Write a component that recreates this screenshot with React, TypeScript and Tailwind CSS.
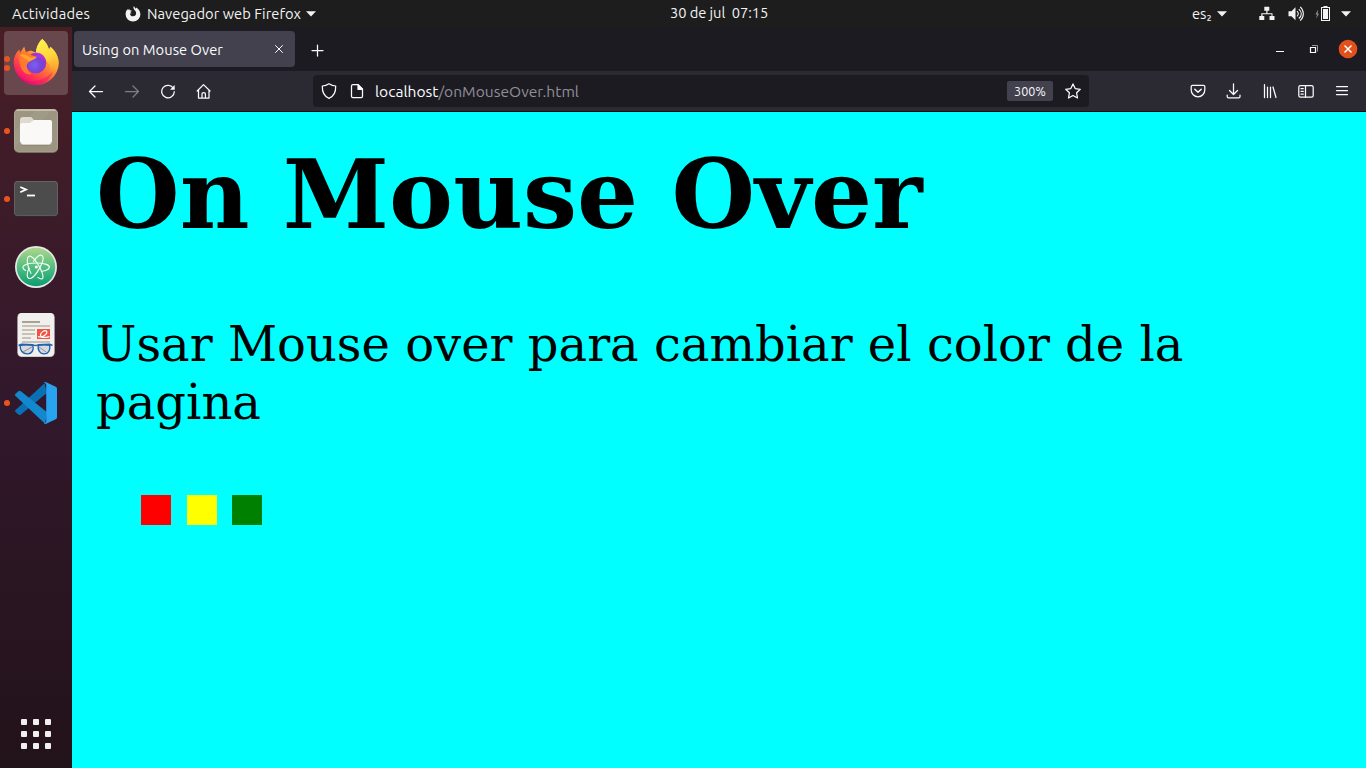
import React, { useState } from "react";

type IconProps = { children: React.ReactNode; className?: string };

function Icon({ children, className = "" }: IconProps) {
  return (
    <svg
      viewBox="0 0 16 16"
      className={`h-4 w-4 shrink-0 text-[#fbfbfe] ${className}`}
      fill="none"
      stroke="currentColor"
      strokeWidth="1.25"
      strokeLinecap="round"
      strokeLinejoin="round"
    >
      {children}
    </svg>
  );
}

function Caret() {
  return (
    <svg viewBox="0 0 10 6" className="h-[6px] w-[10px] shrink-0">
      <path d="M0 .3h10L5 5.6z" fill="#f2f2f2" />
    </svg>
  );
}

function TopBar() {
  return (
    <header className="flex h-[27px] shrink-0 items-center bg-[#1d1d1d] text-[14.667px] leading-[27px] whitespace-pre text-[#f2f2f2]">
      <span className="ml-3 w-[113px] tracking-[0.25px]">Actividades</span>
      <svg viewBox="0 0 16 16" className="h-4 w-4">
        <path
          d="M8.700.3c1.100.8 1.500 1.500 1.700 2.400.5-.2.7-.7.8-1.100 2.400 1.500 4.200 3.800 4.200 6.800A7.300 7.300 0 0 1 8 15.600 7.300 7.300 0 0 1 .6 8.300c0-2.100.7-3.800 1.800-5.300l.5 1.300 1.300-1.500.5 1.500c.8-.1 1.600.1 2.200.5-.5.8-1.500.7-1.700 1.400l1.600.7-1.900.8c.2 1.500 1.300 2.600 3 2.600 2 0 3.200-1.400 3.200-3.100 0-1.900-1.200-2.700-2-3.800C8.500 2.600 8.200 1.400 8.700.3z"
          fill="#f2f2f2"
        />
      </svg>
      <span className="ml-[6px] w-[155px] tracking-[0.05px]">Navegador web Firefox</span>
      <span className="ml-1"><Caret /></span>
      <span className="ml-[354px] w-[100px] pb-[2px] tracking-[-0.05px]">30 de jul  07:15</span>
      <span className="ml-auto w-[21px]">es₂</span>
      <span className="mr-[32px] ml-1"><Caret /></span>
      <svg viewBox="0 0 16 16" className="h-4 w-4">
        <path d="M5.300.8h5v4H8.500v2.500h5V10h2v4h-5v-4h2V8.300h-9V10h1.800v4h-5v-4h2V7.300H7.300V4.800h-2z" fill="#f2f2f2" />
      </svg>
      <svg viewBox="0 0 16 16" className="ml-[13px] h-4 w-4" fill="none" stroke="#f2f2f2">
        <path d="M.5 5.300h3l4-4v13l-4-4h-3z" fill="#f2f2f2" stroke="none" />
        <path d="M9 5.200c1.700 1.500 1.700 3.700 0 5.200M10.800 3.200c3.300 2.800 3.300 6.600 0 9.300M12.200.9c4.200 3.900 4.200 10 0 13.800" strokeWidth="1.1" />
      </svg>
      <svg viewBox="0 0 16 16" className="ml-[11px] h-4 w-4">
        <path d="M3.200 3.600L.3 8.500h1.800L1 12.700l3.200-5H2.700z" fill="#888" />
        <path d="M8.500 0h4v1h2.500v14H6V1h2.500z" fill="#f2f2f2" />
        <path d="M7 2h7v12H7z" fill="#1d1d1d" />
        <path d="M8 3h5v10H8z" fill="#f2f2f2" />
      </svg>
      <span className="mr-[15px] ml-[10px]"><Caret /></span>
    </header>
  );
}

function FirefoxLogo() {
  return (
    <svg viewBox="0 0 48 48" className="h-12 w-12">
      <defs>
        <linearGradient id="ffBody" x1=".85" y1=".05" x2=".2" y2=".95">
          <stop offset="0" stopColor="#fff44f" />
          <stop offset=".32" stopColor="#ffb52c" />
          <stop offset=".55" stopColor="#ff7139" />
          <stop offset=".78" stopColor="#ff3750" />
          <stop offset="1" stopColor="#eb0878" />
        </linearGradient>
        <linearGradient id="ffTail" x1=".3" y1="0" x2=".6" y2="1">
          <stop offset="0" stopColor="#fff154" />
          <stop offset=".5" stopColor="#ffd338" />
          <stop offset="1" stopColor="#ff8a33" stopOpacity="0" />
        </linearGradient>
        <radialGradient id="ffGlobe" cx=".42" cy=".6" r=".65">
          <stop offset="0" stopColor="#7b62ef" />
          <stop offset=".55" stopColor="#7643d8" />
          <stop offset="1" stopColor="#a72ccb" />
        </radialGradient>
      </defs>
      <g transform="translate(0 -1)">
        <path d="M30.300 1c4 3 6 7 6.600 10 1-.3 1.300-1.100 1.500-2.300 5.200 4.500 8.300 10 8.300 16.600A22.500 22.500 0 0 1 24 47 22.500 22.500 0 0 1 1.700 24.500c0-5.700 2.300-9.700 5.700-13l.5 3.500 4.300-6.600 1.600 5.700 5-1.600 5 2c.8-6.600 3.500-10.800 6.500-13.500z" fill="url(#ffBody)" />
        <path d="M30.300 1c3.500 3.500 4.500 7 6.600 10 1-.3 1.300-1.100 1.500-2.300 5.200 4.500 8.300 10 8.300 16.600 0 7-4.500 14-11 16 7-9 1-17-3-20-3.400-2.500-5.800-3.500-8.900-6.800.8-6.600 3.500-10.800 6.500-13.500z" fill="url(#ffTail)" />
        <circle cx="24" cy="25" r="10.300" fill="url(#ffGlobe)" />
        <path d="M23 14.500c6.500-.5 10.500 4 10.800 9-4-4-7-4.500-10-3.500z" fill="#b833e1" opacity=".65" />
        <path d="M7.400 17c3-3.800 7.600-4 10.900-.8 1.700 1.500 5.400 1.600 6.200 2.900-.8 2.400-5.300 2.700-6.800 4.500-1.500 1-3 2.500-3 4.500 0 3.500 2 6 5 8C12 38 6.500 30 7.400 17z" fill="#ff7a30" />
        <path d="M8 17c4-2 7 .8 9.800 2.200 2 .8 4.700.3 6.700-.1-1 2.400-5.300 2.700-6.800 4.500C14 22 12 20 8 17z" fill="#ffa42c" />
        <path d="M4 34c5 8 13 11 24 8 6-2 10-5 13-9-3 9-9 14-17 14C14 47 7 42 4 34z" fill="#e4057b" opacity=".4" />
      </g>
    </svg>
  );
}

function FilesLogo() {
  return (
    <svg viewBox="0 0 48 48" className="h-12 w-12">
      <rect x="2" y="2" width="44" height="44" rx="5" fill="#75705f" />
      <rect x="2" y="2" width="44" height="43" rx="5" fill="#aaa592" />
      <rect x="3" y="3" width="42" height="41.500" rx="4.500" fill="#9b9581" />
      <path d="M3 24L24 3h16L3 40z" fill="#aaa592" opacity=".35" />
      <path d="M6.400 2.500h35.200q2.400 0 3 1.200H3.400q.6-1.200 3-1.200z" fill="#d0cbb9" />
      <path d="M8 13q0-3 3-3h7.500q1.500 0 2.500 2l1 1.500h15q3 0 3 3V34H8z" fill="#dedad0" />
      <path d="M8 18q0-2 2-2h8l4-3h16q2 0 2 2v20q0 3-3 3H11q-3 0-3-3z" fill="#faf9f7" />
      <path d="M8.300 35q.5 3 3 3h25.400q2.500 0 3-3" fill="none" stroke="#77705f" strokeWidth=".6" />
    </svg>
  );
}

function TerminalLogo() {
  return (
    <svg viewBox="0 0 48 48" className="h-12 w-12">
      <rect x="2" y="6" width="44" height="36" rx="4" fill="#2c2c2c" />
      <rect x="2" y="6" width="44" height="35" rx="4" fill="#6b6b6b" />
      <rect x="2.700" y="6.700" width="42.600" height="33.800" rx="3.500" fill="#4c4c4c" />
      <path d="M8.300 12l5.700 2.600-5.700 2.600" fill="none" stroke="#fff" strokeWidth="1.800" />
      <path d="M15 20.500h8" stroke="#fff" strokeWidth="1.800" />
    </svg>
  );
}

function AtomLogo() {
  return (
    <svg viewBox="0 0 48 48" className="h-12 w-12">
      <defs>
        <linearGradient id="atomFill" x1="0" y1="0" x2="0" y2="1">
          <stop offset="0" stopColor="#aed78b" />
          <stop offset=".55" stopColor="#4cbb80" />
          <stop offset="1" stopColor="#0b9b70" />
        </linearGradient>
      </defs>
      <circle cx="24" cy="24" r="21" fill="#e9e8e9" />
      <circle cx="24" cy="24" r="19.300" fill="url(#atomFill)" />
      <g fill="none" stroke="#f0fff5" strokeWidth="1.150" strokeLinecap="round">
        <path d="M13.600 27.500c-7-4 .5-7.500 10.400-7.500 9 0 14 2.100 13.300 4.500-.5 2.200-5 3.700-8 3.800" />
        <path d="M19 30.500c-4-7-5-16-1.800-17.200 4-1.500 12.800 13.600 13.700 19.300.8 5-3 3.500-5 1.800" />
        <path d="M21.500 18.500C25 12.700 29 11 30.500 13c3 4-6.500 20.200-11.500 22.200-4.500 1.700-4.800-5-1.800-10" />
      </g>
      <circle cx="24.300" cy="24" r="1.500" fill="#fff" />
    </svg>
  );
}

function DocumentsLogo() {
  return (
    <svg viewBox="0 0 48 48" className="h-12 w-12">
      <rect x="5.300" y="2" width="37.400" height="44" rx="4.500" fill="#c8c5c0" />
      <rect x="6" y="2" width="36" height="43.200" rx="4" fill="#f1f0ef" />
      <path d="M10 11h18" stroke="#aaa391" strokeWidth="2" />
      <path d="M10 15h28M10 19h13M10 23h13M10 27h9M10 31h28" stroke="#c7c2b4" strokeWidth="2" />
      <rect x="25" y="18" width="13" height="10" fill="#f05243" />
      <path d="M26 25.500c5 2 10-3.300 8.500-5.400-2-1.500-6.300 1.500-6 4.200.5 3 5 2.300 9 1.300" fill="none" stroke="#fff" strokeWidth="1.200" />
      <g fill="#d7d9de" stroke="#2163ad" strokeWidth="1.400">
        <path d="M8.200 34.200q6-1 12.600 0c1.400 5-1.200 8.900-5.500 8.700-4.600.1-7.500-3.500-7.100-8.700z" />
        <path d="M26.200 34.200q6-1 11.600 0c.6 5.200-1.700 8.900-5.800 8.700-4-.1-6.500-4-5.800-8.700z" />
        <path d="M6.500 34.500l3-1.200 11.300.5q2.700 1.300 5.400 0l11.500-.5 2.800 1.200" fill="none" />
      </g>
      <path d="M11 41l9-5M27 36l7 5" stroke="#8d9096" strokeWidth="1" />
    </svg>
  );
}

function CodeLogo() {
  return (
    <svg viewBox="0 0 48 48" className="h-12 w-12">
      <path d="M3.300 31.300L32.500 4.200 34.800 14 9 35.600q-1.300 1-2.600 0l-2.900-2.700q-1-.8-.2-1.600z" fill="#0870b3" />
      <path d="M3.300 16.700q-.9-.8 0-1.600l3.100-2.800q1.200-.9 2.500 0L35 33.200 33.200 44.500 31.700 43.600z" fill="#1288cf" />
      <path d="M34.200 3.200L43.700 7.700Q45 8.400 45 9.800V38.200Q45 39.600 43.700 40.300L34.200 44.800Q33 45.400 31.700 43.700q2.500.8 2.500-1.500V5.800q0-2.300-2.500-1.500 1.300-1.700 2.500-1.100z" fill="#27a3ef" />
    </svg>
  );
}

const dockItems = [
  { logo: <FirefoxLogo />, windows: 2, active: true },
  { logo: <FilesLogo />, windows: 1 },
  { logo: <TerminalLogo />, windows: 1 },
  { logo: <AtomLogo />, windows: 0 },
  { logo: <DocumentsLogo />, windows: 0 },
  { logo: <CodeLogo />, windows: 1 },
];

function Dock() {
  return (
    <aside className="flex w-[72px] shrink-0 flex-col bg-linear-to-b from-[#481e25] via-[#32182c] to-[#221219] pt-[4px]">
      {dockItems.map((item, i) => (
        <div
          key={i}
          className={`relative mx-1 mb-1 flex h-16 shrink-0 items-center justify-center rounded-[4px] ${item.active ? "bg-[#68474d]" : ""}`}
        >
          {item.logo}
          <div className="absolute inset-y-0 left-0 flex flex-col items-center justify-center gap-[3px]">
            {Array.from({ length: item.windows }, (_, n) => (
              <i key={n} className="h-[6px] w-[6px] rounded-full bg-[#e95420]" />
            ))}
          </div>
        </div>
      ))}
      <div className="mx-auto mt-auto mb-[19px] grid grid-cols-3 gap-[6px]">
        {Array.from({ length: 9 }, (_, i) => (
          <i key={i} className="h-[6px] w-[6px] rounded-[1px] bg-[#f2f0ee]" />
        ))}
      </div>
    </aside>
  );
}

function TabStrip() {
  return (
    <div className="flex h-[44px] shrink-0 items-center bg-[#1c1b22] pl-[2px]">
      <div className="mb-px flex h-9 w-[221px] items-center justify-between rounded-[4px] bg-[#42414d] pr-[8px] pl-2 text-[14.667px] text-[#fbfbfe]">
        <span className="pt-[2px] tracking-[0.05px] whitespace-nowrap">Using on Mouse Over</span>
        <Icon><path d="M4.500 4.500l7 7M11.500 4.500l-7 7" strokeWidth="1" /></Icon>
      </div>
      <Icon className="mt-px ml-[15px]"><path d="M7.500 3v11M2 8.500h11" /></Icon>
      <Icon className="ml-auto"><path d="M4 10.500h8" strokeLinecap="butt" strokeWidth="1" /></Icon>
      <Icon className="ml-[18px]">
        <path d="M6 4.500h5.500v6" strokeWidth="1" stroke="#96959c" strokeLinejoin="miter" strokeLinecap="butt" />
        <path d="M4.500 6.500h5v5h-5z" strokeWidth="1.200" strokeLinejoin="miter" />
      </Icon>
      <svg viewBox="0 0 20 20" className="mr-2 ml-[16px] h-5 w-5">
        <circle cx="10" cy="10" r="9.300" fill="#e2501b" />
        <path d="M6.500 6.500l7 7M13.500 6.500l-7 7" stroke="#fff" strokeWidth="1.500" />
      </svg>
    </div>
  );
}

function ToolButton({ children, dim }: { children: React.ReactNode; dim?: boolean }) {
  return (
    <div className="flex w-9 justify-center">
      <Icon className={dim ? "opacity-40" : ""}>{children}</Icon>
    </div>
  );
}

function Toolbar() {
  return (
    <div className="flex h-[41px] shrink-0 items-center border-b border-[#0c0c0d] bg-[#2b2a33] px-[6px]">
      <ToolButton><path d="M14.500 8.500h-13M7 3L1.500 8.500 7 14" /></ToolButton>
      <ToolButton dim><path d="M1.500 8.500h13M9 3l5.500 5.500L9 14" /></ToolButton>
      <ToolButton>
        <path d="M13.500 5.500A6.300 6.300 0 1 0 14.300 8.700" />
        <path d="M14.700 2v4.700H10z" fill="currentColor" stroke="none" />
      </ToolButton>
      <ToolButton><path d="M1.200 8L7.500 1.600 14 8M2.500 7v8h10.500V7M6 15v-4.200q0-1.300 1.700-1.300t1.700 1.300V15" /></ToolButton>
      <div className="ml-[91px] flex h-8 w-[776px] items-center rounded-[4px] bg-[#1c1b22] pr-2 pl-2">
        <Icon><path d="M8 .8c2.300 1.500 4.200 2.100 6.700 2.200.2 6.200-1.700 10.300-6.700 12.300C3 13.300 1.100 9.200 1.300 3 3.800 2.900 5.700 2.300 8 .8z" /></Icon>
        <Icon className="ml-[12px]">
          <path d="M4 1.600h5.200L13.500 6v7.300q0 1.300-1.300 1.300H3.800q-1.300 0-1.300-1.300V2.900q0-1.300 1.500-1.300z" />
          <path d="M9 2l4.300 4.300H9z" fill="currentColor" />
        </Icon>
        <span className="ml-[10px] pt-px text-[15.600px] whitespace-nowrap text-[#fbfbfe]">
          localhost<span className="text-[#8f8f98]">/onMouseOver.html</span>
        </span>
        <span className="mr-3 ml-auto flex h-5 w-[46px] items-center justify-center rounded-[2px] bg-[#42414d] pt-px text-[12.600px] text-[#fbfbfe]">300%</span>
        <Icon><path d="M8 .9l2.200 4.700 5.100.7-3.700 3.500.9 5.200L8 12.500 3.500 15l.9-5.200L.7 6.300l5.100-.7z" /></Icon>
      </div>
      <div className="ml-auto flex">
        <ToolButton>
          <path d="M2.500 2.300h11q1.300 0 1.300 1.300V7a6.800 6.800 0 0 1-13.600 0V3.600q0-1.300 1.300-1.300z" />
          <path d="M4.800 6.200L8 9.200l3.200-3" strokeWidth="1.500" />
        </ToolButton>
        <ToolButton><path d="M7.500.8v10.500M3.500 7.500l4 4 4-4M1.200 12v1.500q0 1.300 1.300 1.300h10.200q1.300 0 1.300-1.300V12" /></ToolButton>
        <ToolButton><path d="M2.500 1.500v13M5.500 4v10.500M8.500 4v10.500M11 4l3 10.500" /></ToolButton>
        <ToolButton>
          <rect x=".8" y="2.600" width="14.400" height="11.600" rx="1.600" />
          <path d="M7.500 2.600v11.600M3 5.500h2.300M3 8.300h2.300M3 11.100h2.300" />
        </ToolButton>
        <ToolButton><path d="M2.500 3.500h11M2.500 7.500h11M2.500 11.500h11" /></ToolButton>
      </div>
    </div>
  );
}

const swatches = [
  { color: "red", className: "bg-[#ff0000]" },
  { color: "yellow", className: "ml-[16px] bg-[#ffff00]" },
  { color: "green", className: "ml-[15px] bg-[#008000]" },
];

function Page() {
  const [background, setBackground] = useState("#00ffff");
  return (
    <main
      className="flex-1 overflow-hidden px-6 pt-[27px] font-['DejaVu_Serif',serif] text-black"
      style={{ background }}
    >
      <h1 className="text-[96px] leading-[112px] font-bold">On Mouse Over</h1>
      <p className="mt-[64px] text-[48px] leading-[58px]">
        Usar Mouse over para cambiar el color de la pagina
      </p>
      <div className="mt-[64px] ml-[45px] flex">
        {swatches.map((s) => (
          <div
            key={s.color}
            className={`h-[30px] w-[30px] ${s.className}`}
            onMouseOver={() => setBackground(s.color)}
          />
        ))}
      </div>
    </main>
  );
}

export default function App() {
  return (
    <div className="flex h-[768px] w-[1366px] flex-col overflow-hidden font-['Ubuntu','Noto_Sans',sans-serif]">
      <TopBar />
      <div className="flex min-h-0 flex-1">
        <Dock />
        <div className="flex min-w-0 flex-1 flex-col">
          <TabStrip />
          <Toolbar />
          <Page />
        </div>
      </div>
    </div>
  );
}
